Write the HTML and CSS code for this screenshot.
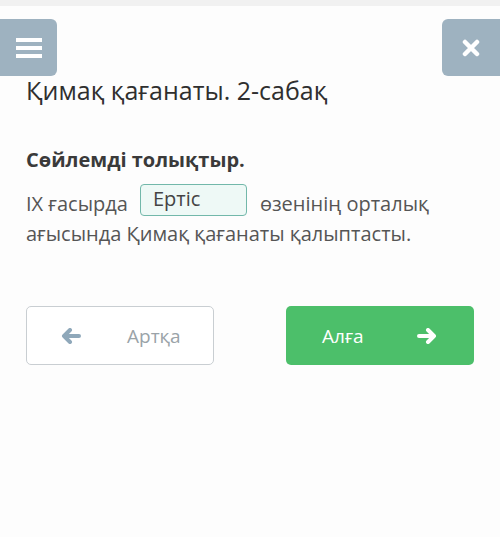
FILE: index.html
```html
<!DOCTYPE html>
<html lang="kk">
<head>
<meta charset="utf-8">
<link rel="stylesheet" href="styles.css">
</head>
<body>
<div class="topstrip"></div>
<header class="header">
  <button class="iconbtn menu" aria-label="menu">
    <svg width="26" height="22" viewBox="0 0 26 22"><rect x="0" y="1" width="26" height="4" fill="#fff"/><rect x="0" y="9" width="26" height="4" fill="#fff"/><rect x="0" y="17" width="26" height="4" fill="#fff"/></svg>
  </button>
  <button class="iconbtn close" aria-label="close">
    <svg width="18" height="18" viewBox="0 0 18 18"><path d="M3 3 L15 15 M15 3 L3 15" stroke="#fff" stroke-width="4.5" stroke-linecap="round"/></svg>
  </button>
</header>
<main class="content">
  <h1 class="title">Қимақ қағанаты. 2-сабақ</h1>
  <h2 class="task">Сөйлемді толықтыр.</h2>
  <p class="sentence"><span>ІХ ғасырда</span><span class="answer">Ертіс</span><span>өзенінің орталық</span> <span>ағысында Қимақ қағанаты қалыптасты.</span></p>
  <div class="nav">
    <button class="navbtn back">
      <svg width="20" height="16" viewBox="0 0 20 16"><path d="M9 2 L3 8 L9 14 M3 8 H18" stroke="#8fa8ba" stroke-width="4" fill="none" stroke-linecap="round" stroke-linejoin="round"/></svg>
      <span>Артқа</span>
    </button>
    <button class="navbtn next">
      <span>Алға</span>
      <svg width="20" height="16" viewBox="0 0 20 16"><path d="M11 2 L17 8 L11 14 M17 8 H2" stroke="#fff" stroke-width="4" fill="none" stroke-linecap="round" stroke-linejoin="round"/></svg>
    </button>
  </div>
</main>
</body>
</html>
```
FILE: styles.css
```css
html, body {
  margin: 0;
  padding: 0;
  background: #fdfdfd;
  font-family: "Open Sans", "Noto Sans", sans-serif;
  color: #333;
}
.topstrip {
  height: 6px;
  background: #f1f1f1;
}
.header {
  display: flex;
  justify-content: space-between;
  margin-top: 13px;
}
.iconbtn {
  width: 57px;
  height: 57px;
  border: none;
  background: #9eb2c0;
  display: flex;
  align-items: center;
  justify-content: center;
  padding: 0;
}
.menu {
  border-radius: 0 6px 6px 0;
}
.menu svg { margin-left: 1px; }
.close {
  width: 58px;
  border-radius: 6px 0 0 6px;
}
.content {
  padding: 0 26px;
}
.title {
  font-size: 25px;
  font-weight: 400;
  line-height: 28px;
  margin: 0;
  color: #2f2f2f;
}
.task {
  font-size: 20px;
  font-weight: 700;
  margin: 44px 0 0;
  line-height: 24px;
  color: #3a3a3a;
}
.sentence {
  font-size: 20px;
  line-height: 30px;
  margin: 17px 0 0;
  color: #555;
}
.answer {
  display: inline-block;
  width: 93px;
  height: 30px;
  line-height: 28px;
  padding-left: 12px;
  margin: -5px 13px 0 12px;
  border: 1px solid #72b8aa;
  border-radius: 4px;
  background: #eef9f6;
  color: #444;
  box-sizing: content-box;
  vertical-align: 5px;
}
.nav {
  display: flex;
  justify-content: space-between;
  margin-top: 57px;
}
.navbtn {
  width: 188px;
  height: 59px;
  border-radius: 5px;
  display: flex;
  align-items: center;
  font-family: inherit;
  font-size: 19px;
  padding: 0;
}
.back {
  background: #fff;
  border: 1.5px solid #c9ced2;
  color: #9aa3a8;
}
.back svg { margin-left: 34px; }
.back span { margin-left: 46px; }
.next {
  background: #4cbf6a;
  border: none;
  color: #fff;
}
.next span { margin-left: 36px; }
.next svg { margin-left: 53px; }
```
